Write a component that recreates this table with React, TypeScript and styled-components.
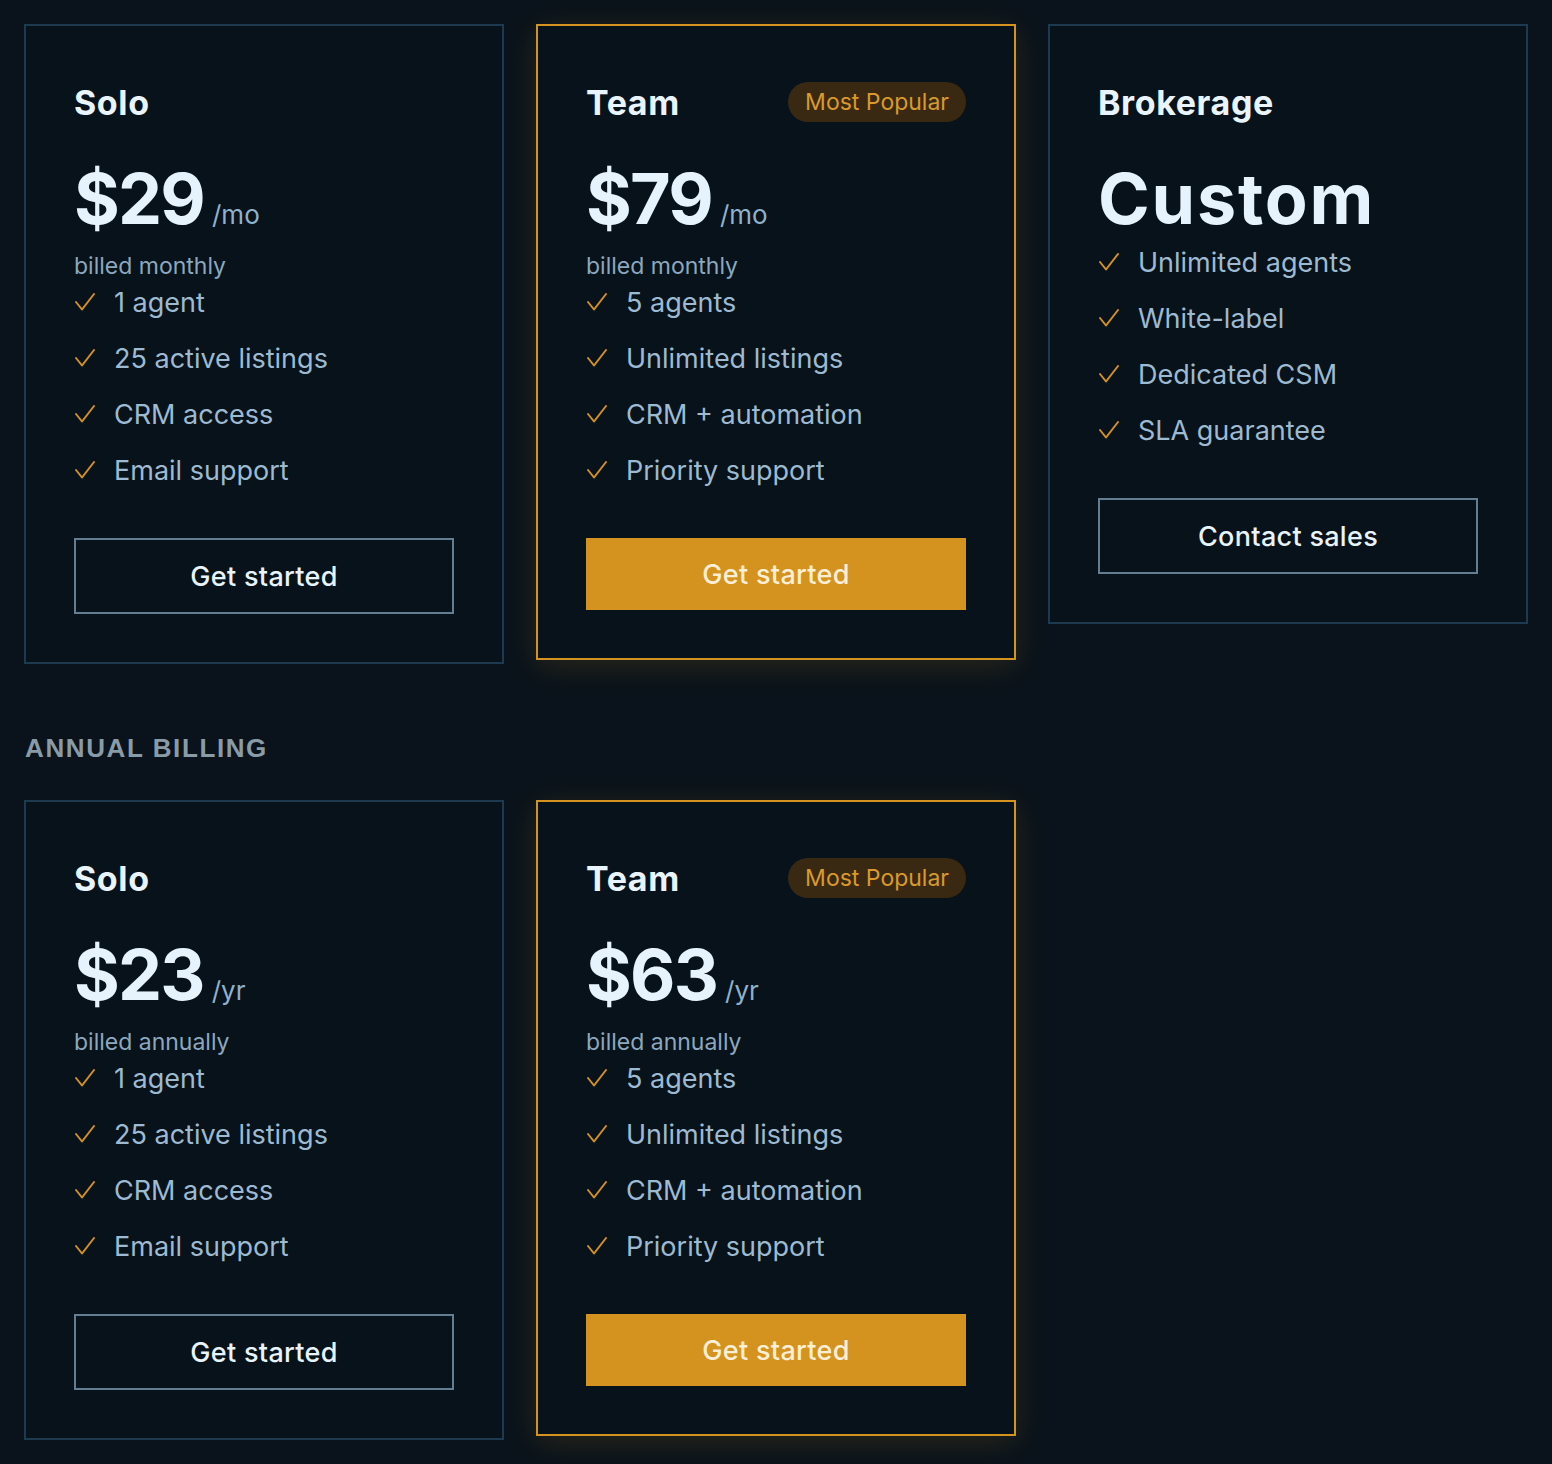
import React from "react";
import styled, { createGlobalStyle, css } from "styled-components";

const GlobalStyle = createGlobalStyle`
  html, body { margin: 0; padding: 0; background: #0a131b; }
  body { font-family: Inter, "Noto Sans", sans-serif; color: #e6f1fb; }
  * { box-sizing: border-box; }
`;

const Page = styled.div`
  padding: 24px;
  min-height: 1464px;
  background: #0a131b;
`;

const Grid = styled.div`
  display: grid;
  grid-template-columns: repeat(3, 480px);
  gap: 32px;
  align-items: start;
`;

const SectionLabel = styled.h2`
  margin: 66px 0 34px 1px;
  font-family: "Liberation Sans", Arial, sans-serif;
  font-size: 26px;
  font-weight: 600;
  letter-spacing: 1.6px;
  line-height: 36px;
  color: #8a9ba8;
  text-transform: uppercase;
`;

const Card = styled.div<{ $featured?: boolean }>`
  display: flex;
  flex-direction: column;
  padding: 48px;
  background: #08121a;
  border: 2px solid #1d3a50;
  ${(p) =>
    p.$featured &&
    css`
      border-color: #d4921f;
      box-shadow: 0 6px 30px rgba(212, 146, 31, 0.16);
    `}
`;

const Header = styled.div`
  display: flex;
  align-items: center;
  justify-content: space-between;
  height: 56px;
`;

const Title = styled.h3`
  margin: 0;
  font-size: 34px;
  font-weight: 700;
  letter-spacing: 0.6px;
  color: #eaf4fd;
`;

const Badge = styled.span`
  display: inline-flex;
  align-items: center;
  height: 40px;
  padding: 0 17px;
  border-radius: 20px;
  background: #3a2912;
  color: #d89a2a;
  font-size: 23px;
  font-weight: 400;
`;

const PriceRow = styled.div`
  display: flex;
  align-items: baseline;
  gap: 8px;
  margin-top: 33px;
  height: 72px;
`;

const Amount = styled.span<{ $word?: boolean }>`
  font-size: 70px;
  line-height: 72px;
  font-weight: 700;
  letter-spacing: ${(p) => (p.$word ? "1.8px" : "-1.8px")};
  color: #e6f3fd;
`;

const Period = styled.span`
  font-size: 26px;
  line-height: 1;
  font-weight: 400;
  color: #8fb1cb;
`;

const Billed = styled.div`
  margin-top: 13px;
  font-size: 23px;
  line-height: 36px;
  color: #8ca8bf;
`;

const Features = styled.ul<{ $offset: number }>`
  list-style: none;
  margin: ${(p) => p.$offset}px 0 0;
  padding: 0;
  display: flex;
  flex-direction: column;
  gap: 16px;
`;

const Feature = styled.li`
  display: flex;
  align-items: center;
  gap: 18px;
  height: 40px;
  font-size: 27px;
  color: #9dbad1;
`;

const Check = styled.svg`
  flex: none;
  width: 22px;
  height: 22px;
`;

const Button = styled.button<{ $primary?: boolean }>`
  margin-top: 48px;
  height: 76px;
  width: 100%;
  font-family: inherit;
  font-size: 27px;
  font-weight: 500;
  letter-spacing: 0.3px;
  cursor: pointer;
  background: transparent;
  color: #e9f3fc;
  border: 2px solid #647d90;
  ${(p) =>
    p.$primary &&
    css`
      height: 72px;
      background: #d4921f;
      border: none;
      color: #fcefd6;
    `}
`;

const CheckIcon = () => (
  <Check viewBox="0 0 22 22" fill="none">
    <polyline
      points="2,11 8,18.5 20,3"
      stroke="#d4921f"
      strokeWidth="2"
      strokeLinecap="round"
      strokeLinejoin="round"
    />
  </Check>
);

type Plan = {
  name: string;
  price: string;
  period?: string;
  billed?: string;
  features: string[];
  cta: string;
  featured?: boolean;
};

const PlanCard = ({ plan }: { plan: Plan }) => (
  <Card $featured={plan.featured}>
    <Header>
      <Title>{plan.name}</Title>
      {plan.featured && <Badge>Most Popular</Badge>}
    </Header>
    <PriceRow>
      <Amount $word={!plan.period}>{plan.price}</Amount>
      {plan.period && <Period>{plan.period}</Period>}
    </PriceRow>
    {plan.billed ? <Billed>{plan.billed}</Billed> : null}
    <Features $offset={plan.billed ? -2 : 7}>
      {plan.features.map((f) => (
        <Feature key={f}>
          <CheckIcon />
          {f}
        </Feature>
      ))}
    </Features>
    <Button $primary={plan.featured}>{plan.cta}</Button>
  </Card>
);

const monthly: Plan[] = [
  {
    name: "Solo",
    price: "$29",
    period: "/mo",
    billed: "billed monthly",
    features: ["1 agent", "25 active listings", "CRM access", "Email support"],
    cta: "Get started",
  },
  {
    name: "Team",
    price: "$79",
    period: "/mo",
    billed: "billed monthly",
    features: ["5 agents", "Unlimited listings", "CRM + automation", "Priority support"],
    cta: "Get started",
    featured: true,
  },
  {
    name: "Brokerage",
    price: "Custom",
    features: ["Unlimited agents", "White-label", "Dedicated CSM", "SLA guarantee"],
    cta: "Contact sales",
  },
];

const annual: Plan[] = [
  {
    name: "Solo",
    price: "$23",
    period: "/yr",
    billed: "billed annually",
    features: ["1 agent", "25 active listings", "CRM access", "Email support"],
    cta: "Get started",
  },
  {
    name: "Team",
    price: "$63",
    period: "/yr",
    billed: "billed annually",
    features: ["5 agents", "Unlimited listings", "CRM + automation", "Priority support"],
    cta: "Get started",
    featured: true,
  },
];

export default function App() {
  return (
    <Page>
      <GlobalStyle />
      <Grid>
        {monthly.map((p) => (
          <PlanCard key={p.name} plan={p} />
        ))}
      </Grid>
      <SectionLabel>Annual billing</SectionLabel>
      <Grid>
        {annual.map((p) => (
          <PlanCard key={p.name} plan={p} />
        ))}
      </Grid>
    </Page>
  );
}
